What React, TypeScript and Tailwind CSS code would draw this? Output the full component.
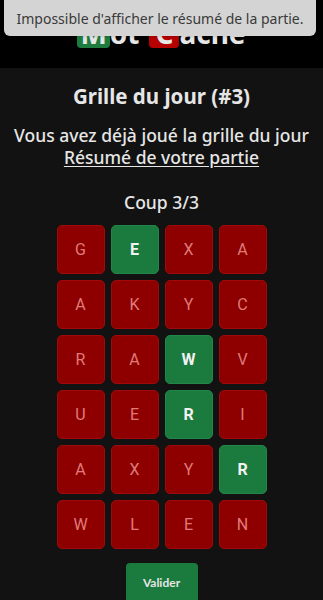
import React from 'react';

type Cell = { l: string; ok: boolean };

const rows: Cell[][] = [
  [{ l: 'G', ok: false }, { l: 'E', ok: true }, { l: 'X', ok: false }, { l: 'A', ok: false }],
  [{ l: 'A', ok: false }, { l: 'K', ok: false }, { l: 'Y', ok: false }, { l: 'C', ok: false }],
  [{ l: 'R', ok: false }, { l: 'A', ok: false }, { l: 'W', ok: true }, { l: 'V', ok: false }],
  [{ l: 'U', ok: false }, { l: 'E', ok: false }, { l: 'R', ok: true }, { l: 'I', ok: false }],
  [{ l: 'A', ok: false }, { l: 'X', ok: false }, { l: 'Y', ok: false }, { l: 'R', ok: true }],
  [{ l: 'W', ok: false }, { l: 'L', ok: false }, { l: 'E', ok: false }, { l: 'N', ok: false }],
];

const App: React.FC = () => {
  return (
    <div className="relative min-h-[600px] bg-[#121212] text-[#e6e6e6] overflow-hidden" style={{ fontFamily: '"Noto Sans", sans-serif' }}>
      <header className="h-[68px] bg-black flex items-center justify-center pb-[2px]">
        <div className="flex items-center text-[28px] font-bold text-[#e6e6e6] leading-none">
          <span className="bg-[#1e7d3e] rounded-[4px] px-[3px] py-[1px]">M</span>
          <span className="mr-[10px]">ot</span>
          <span className="bg-[#b50000] rounded-[4px] px-[6px] py-[1px]">C</span>
          <span>aché</span>
        </div>
      </header>

      <div className="absolute top-0 left-[4px] right-[7px] h-[36px] bg-[#d4d4d4] rounded-b-[6px] flex items-center justify-center text-[14px] text-[#3a3a3a] shadow">
        Impossible d'afficher le résumé de la partie.
      </div>

      <main className="flex flex-col items-center">
        <h1 className="mt-[13px] text-[20.5px] font-bold">Grille du jour (#3)</h1>
        <p className="mt-[12px] text-[17.5px] font-medium leading-[22px] text-center">
          Vous avez déjà joué la grille du jour
          <br />
          <span className="underline underline-offset-2">Résumé de votre partie</span>
        </p>
        <p className="mt-[21px] text-[17.5px] font-medium">Coup 3/3</p>

        <div className="mt-[10px] grid grid-cols-4 gap-[6px]">
          {rows.flat().map((c, i) => (
            <div
              key={i}
              className={
                c.ok
                  ? 'w-[48px] h-[49px] rounded-[5px] bg-[#1b7a3d] border border-[#22864a] flex items-center justify-center text-[16px] font-bold text-[#f2f2f2]'
                  : 'w-[48px] h-[49px] rounded-[5px] bg-[#8e0000] border border-[#a10a0a] flex items-center justify-center text-[16px] text-[#e07a7a]'
              }
              style={{ fontFamily: 'Roboto, sans-serif' }}
            >
              {c.l}
            </div>
          ))}
        </div>

        <button className="mt-[14px] w-[72px] h-[40px] bg-[#1b7a3d] rounded-[4px] text-[12px] font-bold text-[#e6e6e6]" style={{ fontFamily: 'Lato, sans-serif' }}>
          Valider
        </button>
      </main>
    </div>
  );
};

export default App;
